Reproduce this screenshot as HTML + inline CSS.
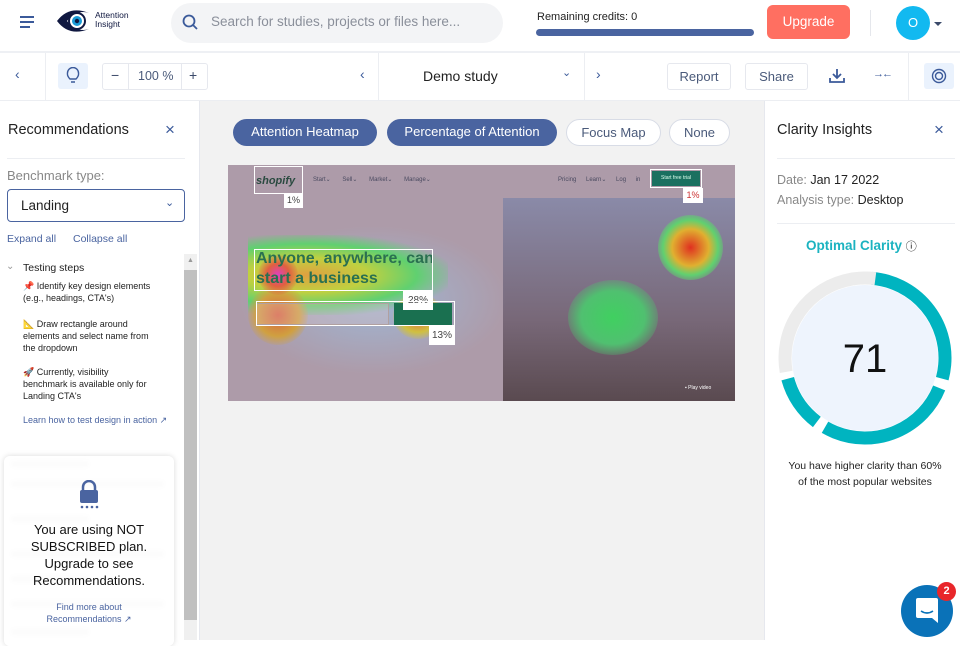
<!DOCTYPE html>
<html><head><meta charset="utf-8"><style>
*{box-sizing:border-box;margin:0;padding:0}
body{width:960px;height:640px;overflow:hidden;font-family:"Liberation Sans",sans-serif;background:#fff;position:relative;color:#222}
.a{position:absolute}
.btn{position:absolute;border:1px solid #e6e8ee;border-radius:3px;background:#fff;color:#4a5a7a;font-size:13px;text-align:center}
.pill{position:absolute;top:119px;height:27px;border-radius:14px;font-size:13px;line-height:25px;text-align:center}
.blur{position:absolute;left:10px;height:8px;background:#e8e8e8;border-radius:4px;filter:blur(2px)}
</style></head><body>
<!-- header -->
<div class="a" style="left:20px;top:16px;width:14px">
<div style="height:2px;background:#3b5a9a;margin-bottom:3px"></div><div style="height:2px;background:#3b5a9a;margin-bottom:3px;width:14px"></div><div style="height:2px;background:#3b5a9a;width:10px"></div></div>
<svg class="a" style="left:55px;top:7px" width="36" height="28" viewBox="0 0 36 28"><path d="M2 14 Q14 -2 34 6 Q22 2 12 14 Q22 26 34 22 Q14 30 2 14Z" fill="#101840"/><circle cx="22" cy="14" r="8" fill="#fff" stroke="#101840" stroke-width="2"/><circle cx="22" cy="14" r="5" fill="#1a9bd7"/><circle cx="22" cy="14" r="2.2" fill="#101840"/></svg>
<div class="a" style="left:95px;top:11px;font-size:8.5px;line-height:9px;color:#101840">Attention<br>Insight</div>
<div class="a" style="left:171px;top:3px;width:332px;height:40px;background:#f3f4f6;border-radius:20px"></div>
<svg class="a" style="left:182px;top:14px" width="17" height="17" viewBox="0 0 17 17"><circle cx="7" cy="7" r="5.5" fill="none" stroke="#3b5a9a" stroke-width="1.8"/><path d="M11 11L15 15" stroke="#3b5a9a" stroke-width="1.8"/></svg>
<div class="a" style="left:211px;top:14px;font-size:13.5px;color:#8a8f9a">Search for studies, projects or files here...</div>
<div class="a" style="left:537px;top:11px;font-size:11px;color:#222">Remaining credits: 0</div>
<div class="a" style="left:536px;top:29px;width:218px;height:7px;background:#4a64a0;border-radius:4px"></div>
<div class="a" style="left:767px;top:5px;width:83px;height:34px;background:#ff6f61;border-radius:6px;color:#fff;font-size:13.5px;text-align:center;line-height:34px">Upgrade</div>
<div class="a" style="left:870px;top:10px;width:1px;height:26px;background:#e5e7ec"></div>
<div class="a" style="left:896px;top:6px;width:34px;height:34px;background:#12b9f0;border-radius:50%;color:#fff;font-size:13px;text-align:center;line-height:34px">O</div>
<div class="a" style="left:934px;top:22px;border:4px solid transparent;border-top:4px solid #3b4a6a"></div>
<div class="a" style="left:0;top:51px;width:960px;height:2px;background:#eef0f4"></div>
<!-- toolbar -->
<div class="a" style="left:15px;top:66px;color:#3b5a9a;font-size:14px">‹</div>
<div class="a" style="left:45px;top:53px;width:1px;height:47px;background:#eceef2"></div>
<div class="a" style="left:58px;top:63px;width:30px;height:26px;background:#eaf2fd;border-radius:3px"></div>
<svg class="a" style="left:66px;top:67px" width="14" height="18" viewBox="0 0 14 18"><path d="M4 12 Q1 9 1.5 6 A5.5 5.5 0 0 1 12.5 6 Q13 9 10 12 Z M5 15 H9" fill="none" stroke="#3b5a9a" stroke-width="1.4"/></svg>
<div class="btn" style="left:102px;top:63px;width:106px;height:27px"></div>
<div class="a" style="left:128px;top:63px;width:1px;height:27px;background:#e6e8ee"></div>
<div class="a" style="left:181px;top:63px;width:1px;height:27px;background:#e6e8ee"></div>
<div class="a" style="left:111px;top:67px;font-size:14px;color:#3b4a6a">−</div>
<div class="a" style="left:138px;top:69px;font-size:12.5px;color:#4a5a7a">100 %</div>
<div class="a" style="left:189px;top:67px;font-size:14px;color:#3b4a6a">+</div>
<div class="a" style="left:360px;top:66px;color:#3b5a9a;font-size:14px">‹</div>
<div class="a" style="left:378px;top:53px;width:1px;height:47px;background:#eceef2"></div>
<div class="a" style="left:423px;top:68px;font-size:14px;color:#222">Demo study</div>
<div class="a" style="left:562px;top:66px;color:#3b5a9a;font-size:11px">⌄</div>
<div class="a" style="left:584px;top:53px;width:1px;height:47px;background:#eceef2"></div>
<div class="a" style="left:596px;top:66px;color:#3b5a9a;font-size:14px">›</div>
<div class="btn" style="left:667px;top:63px;width:64px;height:27px;line-height:25px">Report</div>
<div class="btn" style="left:745px;top:63px;width:63px;height:27px;line-height:25px">Share</div>
<svg class="a" style="left:829px;top:68px" width="16" height="16" viewBox="0 0 16 16"><path d="M8 1V10M4 6L8 10L12 6M1 10V14H15V10" fill="none" stroke="#3b5a9a" stroke-width="1.8"/></svg>
<div class="a" style="left:873px;top:68px;font-size:11px;color:#3b5a9a;letter-spacing:-2px">→←</div>
<div class="a" style="left:908px;top:53px;width:1px;height:47px;background:#eceef2"></div>
<div class="a" style="left:924px;top:63px;width:30px;height:26px;background:#eaf2fd;border-radius:3px"></div>
<svg class="a" style="left:931px;top:68px" width="16" height="16" viewBox="0 0 16 16"><circle cx="8" cy="8" r="6.5" fill="none" stroke="#3b5a9a" stroke-width="1.4"/><circle cx="8" cy="8" r="3.5" fill="none" stroke="#3b5a9a" stroke-width="1.4"/></svg>
<div class="a" style="left:0;top:100px;width:960px;height:1px;background:#eceef2"></div>
<!-- center -->
<div class="a" style="left:200px;top:101px;width:564px;height:539px;background:#f2f2f2"></div>
<div class="pill" style="left:233px;width:144px;background:#4a64a0;color:#fff">Attention Heatmap</div>
<div class="pill" style="left:387px;width:170px;background:#4a64a0;color:#fff">Percentage of Attention</div>
<div class="pill" style="left:566px;width:95px;background:#fff;border:1px solid #d8dce6;color:#4a5a7a">Focus Map</div>
<div class="pill" style="left:669px;width:61px;background:#fff;border:1px solid #d8dce6;color:#4a5a7a">None</div>
<div class="a" style="left:228px;top:165px;width:507px;height:236px;background:#ad9ba9;overflow:hidden">
 <div class="a" style="left:275px;top:33px;width:232px;height:203px;background:linear-gradient(180deg,#8a8aa8,#786878 60%,#5a4a50)"></div>
 <div class="a" style="left:10px;top:60px;width:270px;height:150px;background:radial-gradient(ellipse at 50% 50%,rgba(150,200,240,.6),rgba(150,200,240,0) 70%)"></div>
 <div class="a" style="left:20px;top:70px;width:200px;height:80px;background:radial-gradient(ellipse at 30% 50%,#e0a040 0,#c0d040 30%,#60d070 55%,rgba(100,200,220,0) 75%)"></div>
 <div class="a" style="left:20px;top:120px;width:60px;height:60px;border-radius:50%;background:radial-gradient(#d86040,#d0a040 50%,rgba(100,220,100,0) 75%)"></div>
 <div class="a" style="left:165px;top:128px;width:50px;height:46px;border-radius:50%;background:radial-gradient(#e06040,#d0c040 50%,rgba(100,220,100,0) 75%)"></div>
 <div class="a" style="left:30px;top:90px;width:40px;height:40px;border-radius:50%;background:radial-gradient(#e040c0,#e06040 40%,rgba(220,120,60,0) 75%)"></div>
 <div class="a" style="left:430px;top:50px;width:65px;height:65px;border-radius:50%;background:radial-gradient(#e03020,#e0b030 40%,#60d070 60%,rgba(100,200,220,0) 80%)"></div>
 <div class="a" style="left:340px;top:115px;width:90px;height:75px;border-radius:50%;background:radial-gradient(#40d060,#50c070 50%,rgba(100,200,220,0) 80%)"></div>
 <div class="a" style="left:28px;top:10px;font-size:11px;font-style:italic;font-weight:bold;color:#2a4a40">shopify</div>
 <div class="a" style="left:85px;top:11px;font-size:6px;color:#4a4a60;word-spacing:10px">Start⌄ Sell⌄ Market⌄ Manage⌄</div>
 <div class="a" style="left:330px;top:11px;font-size:6px;color:#4a4a60;word-spacing:8px">Pricing Learn⌄ Log in</div>
 <div class="a" style="left:424px;top:6px;width:48px;height:15px;background:#1a7060;color:#dfe;font-size:5px;line-height:15px;text-align:center">Start free trial</div>
 <div class="a" style="left:28px;top:84px;font-size:16px;font-weight:bold;line-height:20px;color:#2a7050">Anyone, anywhere, can<br>start a business</div>
 <div class="a" style="left:28px;top:138px;width:133px;height:22px;border:1px solid #b0a0a0;background:rgba(230,200,200,.3)"></div>
 <div class="a" style="left:166px;top:138px;width:58px;height:22px;background:#1a7050"></div>
 <div class="a" style="left:457px;top:220px;font-size:5px;color:#fff">▪ Play video</div>
 <div class="a" style="left:26px;top:1px;width:49px;height:28px;border:1px solid #fff"></div>
 <div class="a" style="left:56px;top:28px;width:19px;height:15px;background:#fff;font-size:9px;text-align:center;line-height:15px;color:#444">1%</div>
 <div class="a" style="left:422px;top:4px;width:52px;height:19px;border:1px solid #fff"></div>
 <div class="a" style="left:455px;top:23px;width:20px;height:15px;background:#fff;font-size:9px;text-align:center;line-height:15px;color:#c33">1%</div>
 <div class="a" style="left:26px;top:84px;width:179px;height:42px;border:1px solid #fff"></div>
 <div class="a" style="left:175px;top:126px;width:30px;height:19px;background:#fff;font-size:10px;text-align:center;line-height:19px;color:#444">28%</div>
 <div class="a" style="left:28px;top:136px;width:199px;height:25px;border:1px solid #fff"></div>
 <div class="a" style="left:201px;top:161px;width:26px;height:19px;background:#fff;font-size:10px;text-align:center;line-height:19px;color:#444">13%</div>
</div>
<!-- left panel -->
<div class="a" style="left:199px;top:101px;width:1px;height:539px;background:#e6e8ee"></div>
<div class="a" style="left:8px;top:122px;font-size:14.5px;color:#222">Recommendations</div>
<div class="a" style="left:165px;top:120px;font-size:17px;color:#3b5a9a">×</div>
<div class="a" style="left:7px;top:158px;width:178px;height:1px;background:#eceef2"></div>
<div class="a" style="left:7px;top:168px;font-size:13px;color:#888">Benchmark type:</div>
<div class="a" style="left:7px;top:189px;width:178px;height:33px;border:1px solid #4a64a0;border-radius:4px"></div>
<div class="a" style="left:21px;top:198px;font-size:13.5px;color:#222">Landing</div>
<div class="a" style="left:165px;top:196px;font-size:11px;color:#3b5a9a">⌄</div>
<div class="a" style="left:7px;top:233px;font-size:10.5px;color:#4a64a0">Expand all</div>
<div class="a" style="left:73px;top:233px;font-size:10.5px;color:#4a64a0">Collapse all</div>
<div class="a" style="left:184px;top:254px;width:13px;height:386px;background:#f0f0f0"></div>
<div class="a" style="left:184px;top:270px;width:13px;height:350px;background:#c0c0c0"></div>
<div class="a" style="left:187px;top:257px;font-size:7px;color:#999">▲</div>
<div class="a" style="left:6px;top:261px;font-size:10px;color:#999">⌄</div>
<div class="a" style="left:23px;top:262px;font-size:10.5px;color:#222">Testing steps</div>
<div class="a" style="left:23px;top:280px;font-size:9px;line-height:12px;color:#222">📌 Identify key design elements<br>(e.g., headings, CTA's)</div>
<div class="a" style="left:23px;top:318px;font-size:9px;line-height:12px;color:#222">📐 Draw rectangle around<br>elements and select name from<br>the dropdown</div>
<div class="a" style="left:23px;top:366px;font-size:9px;line-height:12px;color:#222">🚀 Currently, visibility<br>benchmark is available only for<br>Landing CTA's</div>
<div class="a" style="left:23px;top:415px;font-size:9px;color:#4a64a0">Learn how to test design in action ↗</div>
<div class="blur" style="top:460px;width:80px"></div><div class="blur" style="top:480px;width:155px"></div><div class="blur" style="top:515px;width:80px"></div><div class="blur" style="top:550px;width:155px"></div><div class="blur" style="top:575px;width:80px"></div><div class="blur" style="top:600px;width:155px"></div><div class="blur" style="top:628px;width:80px"></div>
<div class="a" style="left:4px;top:456px;width:170px;height:190px;background:rgba(255,255,255,.85);border-radius:6px;box-shadow:0 0 6px rgba(0,0,0,.15)"></div>
<svg class="a" style="left:78px;top:480px" width="22" height="30" viewBox="0 0 22 30"><path d="M5 11V7A6 6 0 0 1 17 7V11" fill="none" stroke="#4a64a0" stroke-width="2.5"/><rect x="2" y="10" width="18" height="13" rx="2" fill="#4a64a0"/><circle cx="4" cy="27" r="1.3" fill="#4a64a0"/><circle cx="9" cy="27" r="1.3" fill="#4a64a0"/><circle cx="14" cy="27" r="1.3" fill="#4a64a0"/><circle cx="19" cy="27" r="1.3" fill="#4a64a0"/></svg>
<div class="a" style="left:4px;top:521px;width:170px;text-align:center;font-size:13px;line-height:17px;color:#111">You are using NOT<br>SUBSCRIBED plan.<br>Upgrade to see<br>Recommendations.</div>
<div class="a" style="left:4px;top:602px;width:170px;text-align:center;font-size:9px;line-height:11.5px;color:#4a64a0">Find more about<br>Recommendations ↗</div>
<!-- right panel -->
<div class="a" style="left:764px;top:101px;width:1px;height:539px;background:#e6e8ee"></div>
<div class="a" style="left:777px;top:122px;font-size:14.5px;color:#222">Clarity Insights</div>
<div class="a" style="left:934px;top:120px;font-size:17px;color:#3b5a9a">×</div>
<div class="a" style="left:777px;top:158px;width:178px;height:1px;background:#eceef2"></div>
<div class="a" style="left:777px;top:173px;font-size:12.5px;color:#888">Date: <span style="color:#222">Jan 17 2022</span></div>
<div class="a" style="left:777px;top:193px;font-size:12.5px;color:#888">Analysis type: <span style="color:#222">Desktop</span></div>
<div class="a" style="left:777px;top:223px;width:178px;height:1px;background:#eceef2"></div>
<div class="a" style="left:806px;top:238px;font-size:13.5px;font-weight:bold;color:#1bb3c0">Optimal Clarity <span style="color:#111;font-size:11px;font-weight:normal">ⓘ</span></div>
<svg class="a" style="left:777px;top:270px" width="176" height="176" viewBox="0 0 176 176">
<circle cx="88" cy="88" r="73" fill="#eef4fd"/>
<g fill="none" stroke-width="13" transform="rotate(0 88 88)">
<circle cx="88" cy="88" r="80" stroke="#00b4c0" stroke-dasharray="139.6 400" transform="rotate(-85 88 88)"/>
<circle cx="88" cy="88" r="80" stroke="#00b4c0" stroke-dasharray="136.8 400" transform="rotate(22 88 88)"/>
<circle cx="88" cy="88" r="80" stroke="#00b4c0" stroke-dasharray="53 450" transform="rotate(127 88 88)"/>
<circle cx="88" cy="88" r="80" stroke="#ececec" stroke-dasharray="128 400" transform="rotate(170 88 88)"/>
<circle cx="88" cy="88" r="80" stroke="#ececec" stroke-dasharray="16 480" transform="rotate(266 88 88)"/>
</g>
<text x="88" y="102" text-anchor="middle" font-family="Liberation Sans" font-size="40" fill="#111">71</text>
</svg>
<div class="a" style="left:770px;top:458px;width:190px;text-align:center;font-size:10.5px;line-height:16px;color:#222">You have higher clarity than 60%<br>of the most popular websites</div>
<div class="a" style="left:901px;top:585px;width:52px;height:52px;border-radius:50%;background:#0a72b8"></div>
<svg class="a" style="left:915px;top:597px" width="24" height="28" viewBox="0 0 24 28"><path d="M3 1H21A2 2 0 0 1 23 3V26L17 21H3A2 2 0 0 1 1 19V3A2 2 0 0 1 3 1Z" fill="#fff"/><path d="M6 14Q12 18 18 14" stroke="#0a72b8" stroke-width="1.6" fill="none"/></svg>
<div class="a" style="left:937px;top:582px;width:19px;height:19px;border-radius:50%;background:#e8262a;color:#fff;font-size:11px;font-weight:bold;text-align:center;line-height:19px">2</div>
</body></html>
